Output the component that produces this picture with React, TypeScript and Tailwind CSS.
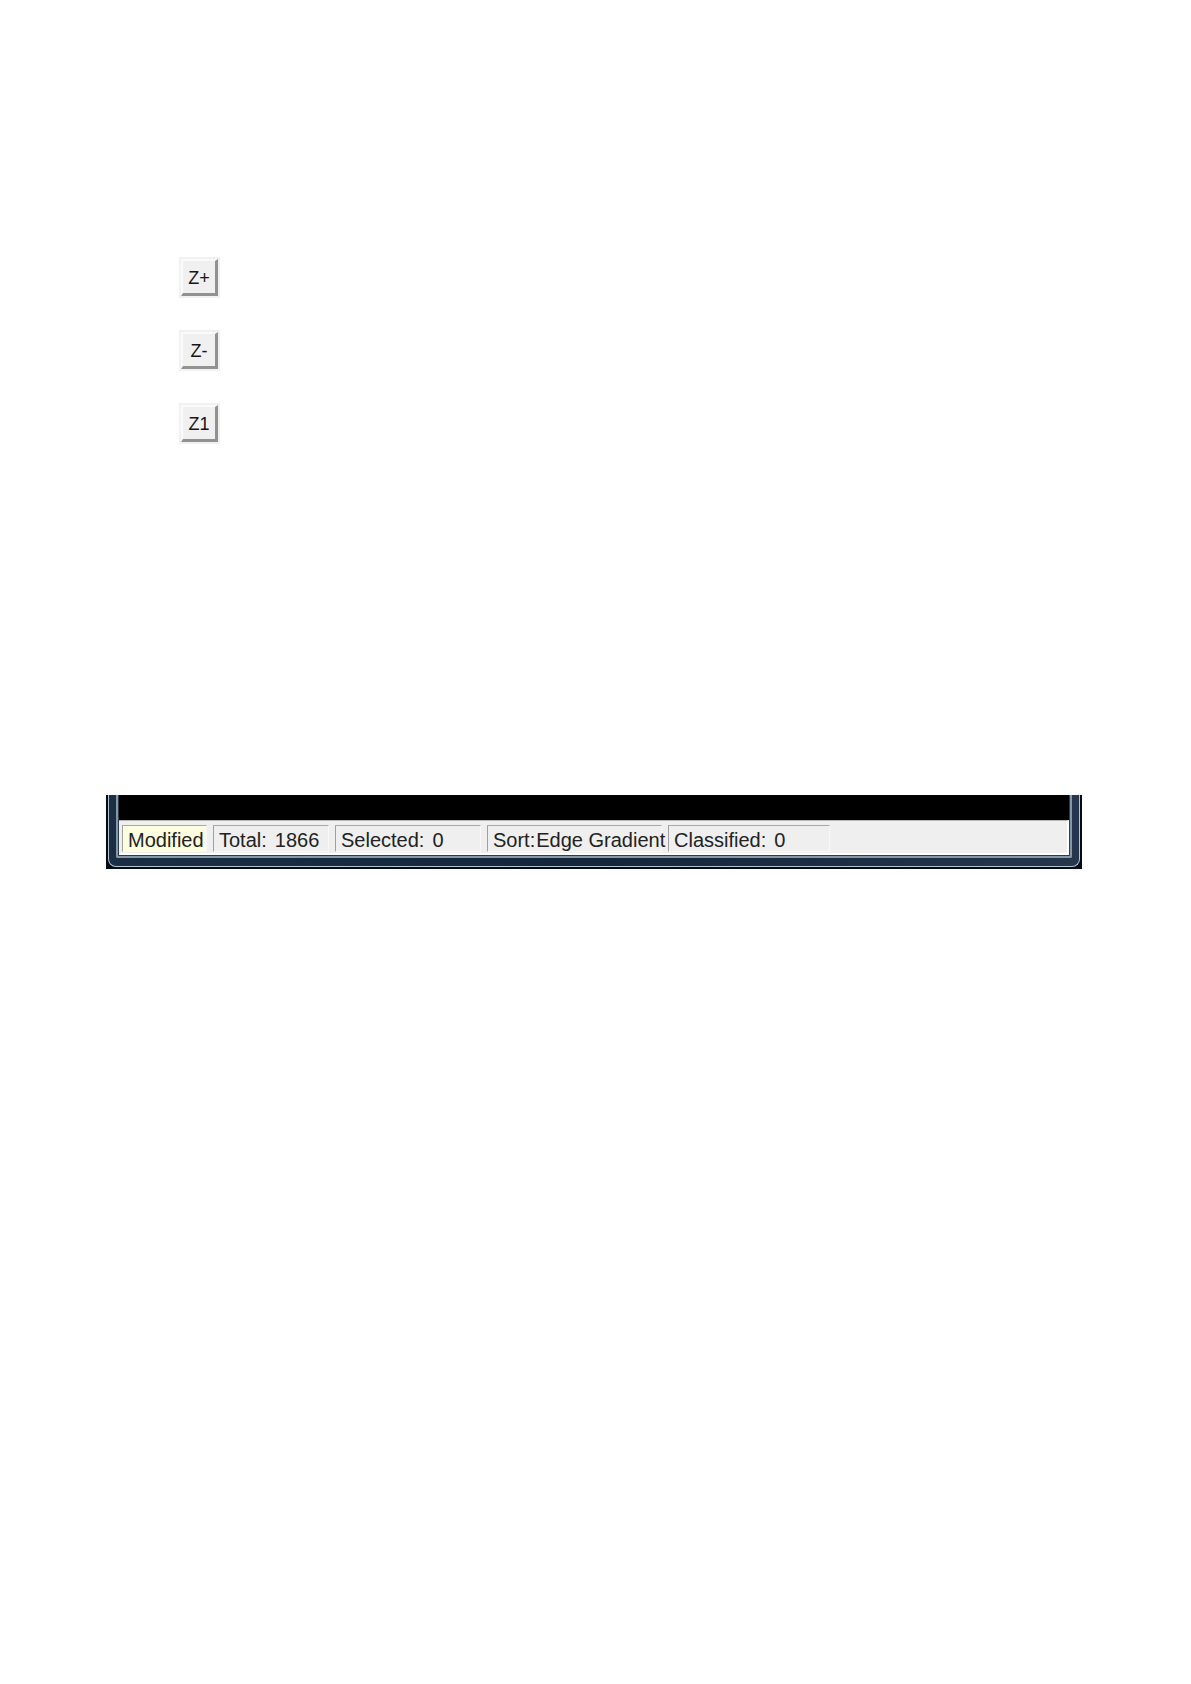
const zoomButtons = [
  { label: "Z+", title: "Zoom in" },
  { label: "Z-", title: "Zoom out" },
  { label: "Z1", title: "Actual size" },
];

const statusCells = [
  { label: "Modified", value: "", className: "w-[85px] bg-[#fdfde0]" },
  { label: "Total: ", value: "1866", className: "w-[116px] gap-2" },
  { label: "Selected: ", value: "0", className: "w-[146px] gap-2" },
  { label: "Sort: ", value: "Edge Gradient", className: "w-[175px] gap-px" },
  { label: "Classified: ", value: "0", className: "w-[162px] gap-2" },
];

function ZoomButton({ label, title }: { label: string; title: string }) {
  return (
    <div className="bg-[#f1f1f1] p-[2px]">
      <button
        type="button"
        aria-label={`${label} ${title}`}
        className="flex h-[37px] w-[37px] items-center justify-center border-t-2 border-l-2 border-r-[3px] border-b-[3px] border-t-[#fafafa] border-l-[#fafafa] border-r-[#929292] border-b-[#929292] bg-[#f0f0f0] pt-[2px] text-[18px] leading-none text-[#161616]"
      >
        {label}
      </button>
    </div>
  );
}

function StatusBar() {
  return (
    <footer className="flex h-[35px] gap-[6px] border-t border-r-2 border-b-2 border-t-[#b5b5b5] border-r-white border-b-white bg-[#efefef] pt-[4px] pb-px pl-[3px]">
      {statusCells.map((cell) => (
        <div
          key={cell.label}
          className={`flex shrink-0 items-center border border-t-[#a9a9a9] border-l-[#a0a0a0] border-r-[#f8f8f8] border-b-[#f8f8f8] pt-[2px] pl-[5px] text-[20px] leading-none whitespace-nowrap text-[#222222] ${cell.className}`}
        >
          <span>{cell.label}</span>
          {cell.value && <span>{cell.value}</span>}
        </div>
      ))}
    </footer>
  );
}

function App() {
  return (
    <main className="min-h-screen bg-white pt-[257px] font-['Liberation_Sans',Arial,sans-serif]">
      <div className="flex flex-col items-start gap-8 pl-[179px]">
        {zoomButtons.map((button) => (
          <ZoomButton key={button.label} {...button} />
        ))}
      </div>

      {/* lower edge of the application window */}
      <section className="mt-[351px] mr-[109px] ml-[106px] bg-[#050b16] px-[2px] pb-[2px]">
        <div className="rounded-b-lg border-x border-b border-[#b5c4d1] bg-linear-to-r from-[#1b2e45] via-[#15263b] to-[#26374d] px-[7px] pb-[8px]">
          <div className="rounded-b-xs border-x-2 border-b-2 border-[#8499a8] bg-[#2c3c4a] px-px pb-px">
            <div className="h-[25px] bg-black" />
            <StatusBar />
          </div>
        </div>
      </section>
    </main>
  );
}

export default App;
